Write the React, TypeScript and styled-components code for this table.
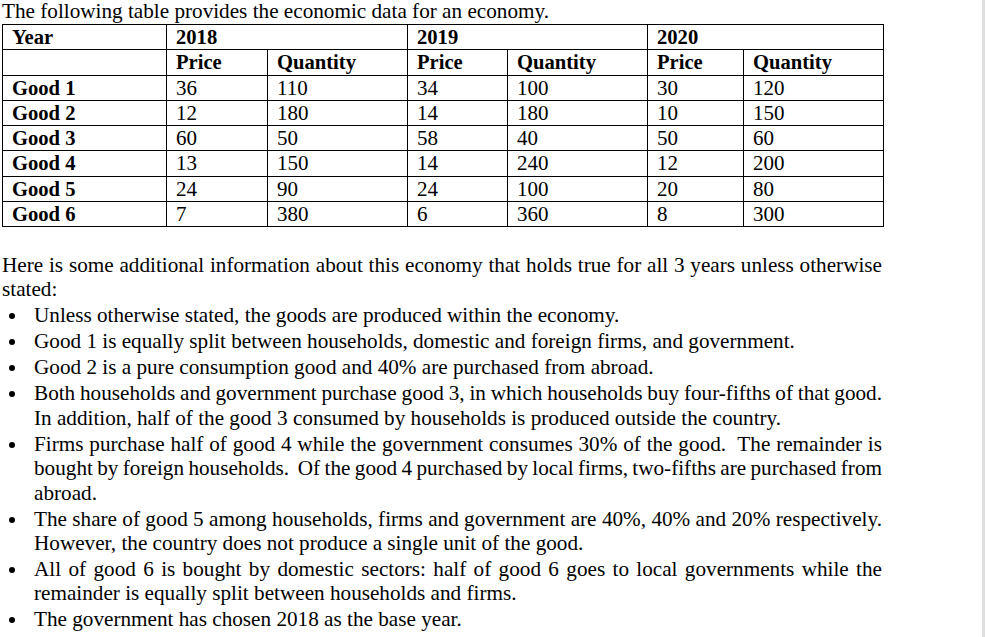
import React from "react";
import styled, { createGlobalStyle } from "styled-components";

const GlobalStyle = createGlobalStyle`
  html, body {
    margin: 0;
    padding: 0;
    background: #ffffff;
  }
  body {
    font-family: "Liberation Serif", "Times New Roman", serif;
    color: #000000;
  }
`;

const Page = styled.div`
  width: 985px;
  height: 637px;
  display: flex;
  overflow: hidden;
  background: #ffffff;
`;

const Content = styled.main`
  flex: 1;
  padding-left: 2px;
  min-width: 0;
`;

const ScrollStrip = styled.div`
  width: 3px;
  background: #dedede;
`;

const Title = styled.p`
  margin: 0 0 2px 0;
  font-size: 21.2px;
  line-height: 22px;
  white-space: nowrap;
`;

const Table = styled.table`
  border-collapse: collapse;
  table-layout: fixed;
  width: 881px;
  font-size: 21px;
`;

const Cell = styled.td<{ $bold?: boolean }>`
  border: 1px solid #000;
  height: 24.25px;
  padding: 0 0 0 9px;
  line-height: 24px;
  font-weight: ${(p) => (p.$bold ? 700 : 400)};
  font-size: ${(p) => (p.$bold ? "20.6px" : "21px")};
  white-space: nowrap;
  vertical-align: middle;
`;

const Section = styled.section`
  margin-top: 26px;
  width: 880px;
  font-size: 21.2px;
`;

const Line = styled.span<{ $justify?: boolean }>`
  display: block;
  line-height: 24.4px;
  white-space: nowrap;
  text-align: ${(p) => (p.$justify ? "justify" : "left")};
  text-align-last: ${(p) => (p.$justify ? "justify" : "left")};
  word-spacing: ${(p) => (p.$justify ? "-2px" : "normal")};
`;

const Intro = styled.p`
  margin: 0 0 1px 0;
`;

const Bullets = styled.ul`
  list-style: none;
  margin: 0;
  padding: 0;
`;

const Bullet = styled.li`
  display: flex;
  margin-top: 1.6px;
`;

const Dot = styled.span`
  width: 32px;
  flex: none;
  display: flex;
  align-items: flex-start;
  padding-top: 10px;
  padding-left: 7px;
  box-sizing: border-box;
  &::before {
    content: "";
    width: 6px;
    height: 6px;
    border-radius: 50%;
    background: #000;
  }
`;

const BulletText = styled.div`
  flex: 1;
  min-width: 0;
`;

const widths = [164, 101, 140, 100, 140, 96, 140];

const goods: [string, number[]][] = [
  ["Good 1", [36, 110, 34, 100, 30, 120]],
  ["Good 2", [12, 180, 14, 180, 10, 150]],
  ["Good 3", [60, 50, 58, 40, 50, 60]],
  ["Good 4", [13, 150, 14, 240, 12, 200]],
  ["Good 5", [24, 90, 24, 100, 20, 80]],
  ["Good 6", [7, 380, 6, 360, 8, 300]],
];

type L = { t: string; j?: boolean };
const bullets: L[][] = [
  [{ t: "Unless otherwise stated, the goods are produced within the economy." }],
  [{ t: "Good 1 is equally split between households, domestic and foreign firms, and government." }],
  [{ t: "Good 2 is a pure consumption good and 40% are purchased from abroad." }],
  [
    { t: "Both households and government purchase good 3, in which households buy four-fifths of that good.", j: true },
    { t: "In addition, half of the good 3 consumed by households is produced outside the country." },
  ],
  [
    { t: "Firms purchase half of good 4 while the government consumes 30% of the good.\u00a0 The remainder is", j: true },
    { t: "bought by foreign households.\u00a0 Of the good 4 purchased by local firms, two-fifths are purchased from", j: true },
    { t: "abroad." },
  ],
  [
    { t: "The share of good 5 among households, firms and government are 40%, 40% and 20% respectively.", j: true },
    { t: "However, the country does not produce a single unit of the good." },
  ],
  [
    { t: "All of good 6 is bought by domestic sectors: half of good 6 goes to local governments while the", j: true },
    { t: "remainder is equally split between households and firms." },
  ],
  [{ t: "The government has chosen 2018 as the base year." }],
];

export default function App() {
  return (
    <>
      <GlobalStyle />
      <Page>
        <Content>
          <Title>The following table provides the economic data for an economy.</Title>
          <Table>
            <colgroup>
              {widths.map((w, i) => (
                <col key={i} style={{ width: w }} />
              ))}
            </colgroup>
            <tbody>
              <tr>
                <Cell $bold>Year</Cell>
                <Cell $bold colSpan={2}>2018</Cell>
                <Cell $bold colSpan={2}>2019</Cell>
                <Cell $bold colSpan={2}>2020</Cell>
              </tr>
              <tr>
                <Cell />
                <Cell $bold>Price</Cell>
                <Cell $bold>Quantity</Cell>
                <Cell $bold>Price</Cell>
                <Cell $bold>Quantity</Cell>
                <Cell $bold>Price</Cell>
                <Cell $bold>Quantity</Cell>
              </tr>
              {goods.map(([name, vals]) => (
                <tr key={name}>
                  <Cell $bold>{name}</Cell>
                  {vals.map((v, i) => (
                    <Cell key={i}>{v}</Cell>
                  ))}
                </tr>
              ))}
            </tbody>
          </Table>
          <Section>
            <Intro>
              <Line $justify>
                Here is some additional information about this economy that holds true for all 3 years unless otherwise
              </Line>
              <Line>stated:</Line>
            </Intro>
            <Bullets>
              {bullets.map((lines, i) => (
                <Bullet key={i}>
                  <Dot />
                  <BulletText>
                    {lines.map((l, k) => (
                      <Line key={k} $justify={l.j}>
                        {l.t}
                      </Line>
                    ))}
                  </BulletText>
                </Bullet>
              ))}
            </Bullets>
          </Section>
        </Content>
        <ScrollStrip />
      </Page>
    </>
  );
}
